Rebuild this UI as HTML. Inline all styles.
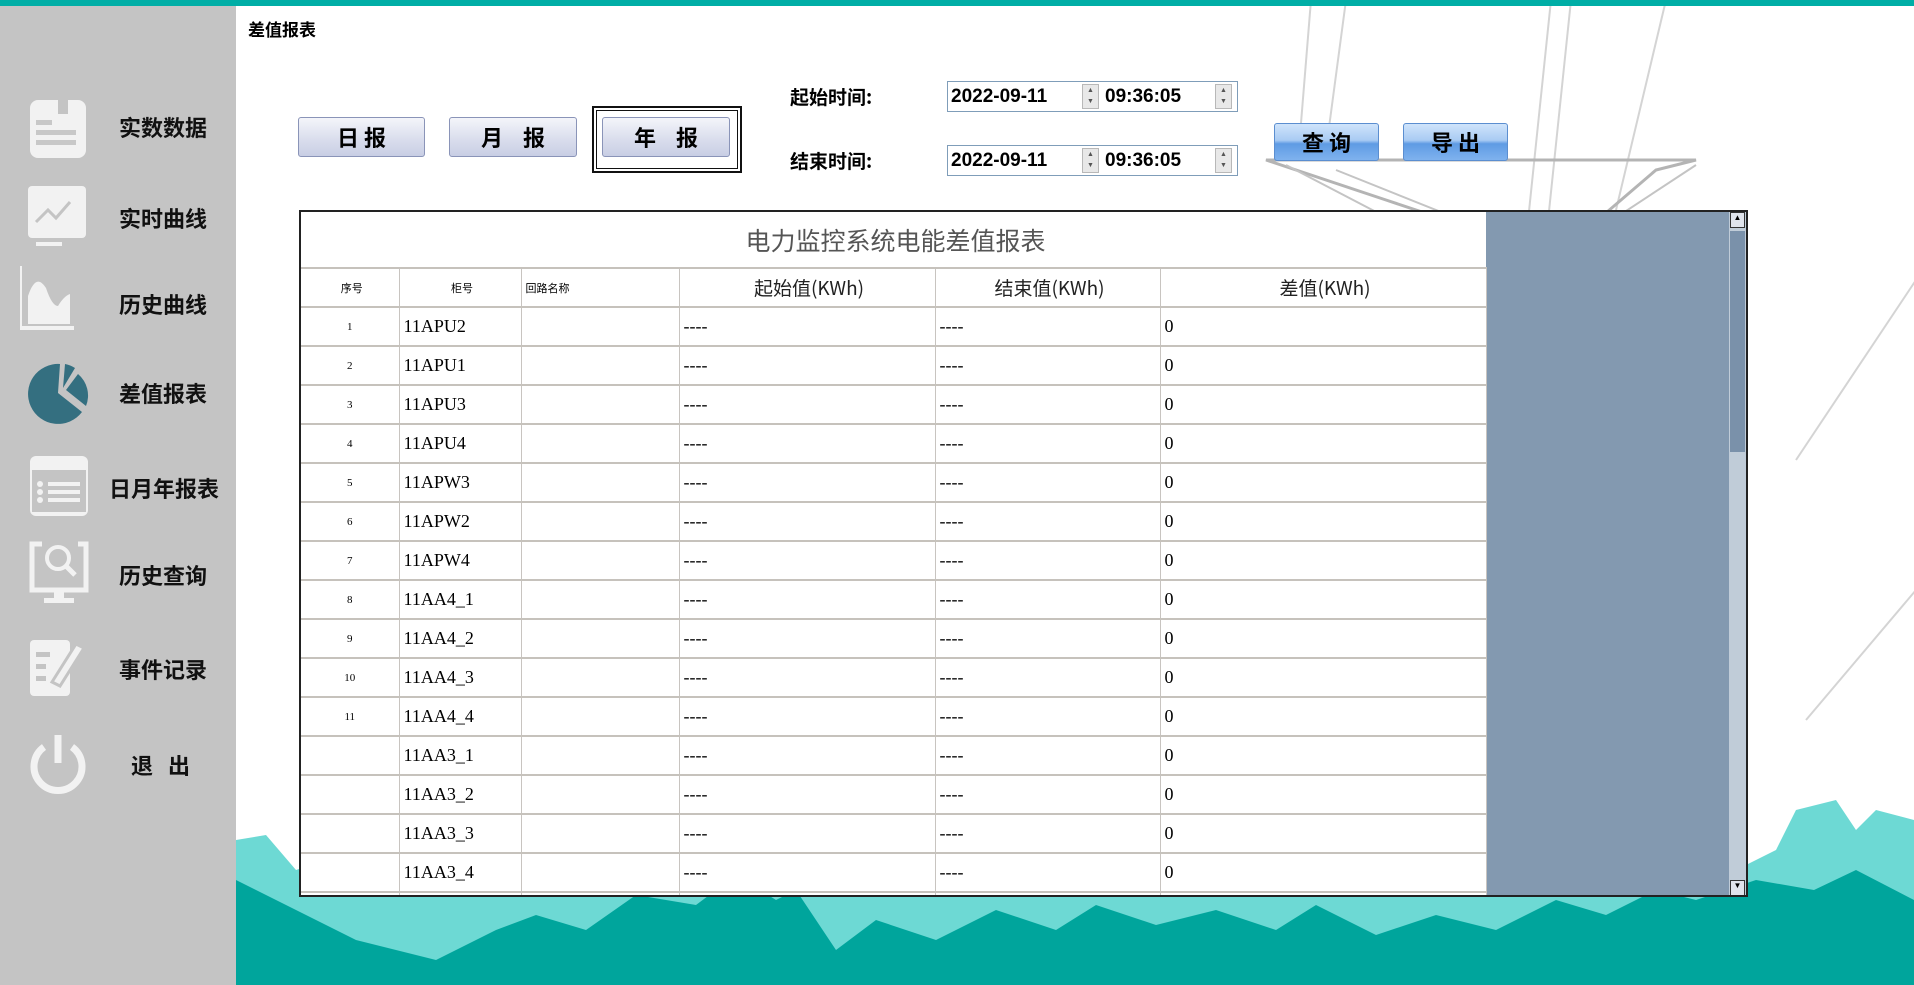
<!DOCTYPE html>
<html><head><meta charset="utf-8"><style>
*{margin:0;padding:0;box-sizing:border-box}
body{width:1914px;height:985px;position:relative;overflow:hidden;background:#fff;font-family:"Liberation Sans","Noto Sans CJK SC",sans-serif}
.top{position:absolute;left:0;top:0;width:1914px;height:6px;background:#00aea6}
.side{position:absolute;left:0;top:6px;width:236px;height:979px;background:#c4c4c4}
.nav{position:absolute;font-weight:bold;font-size:22px;color:#111;font-family:"Noto Sans CJK SC",sans-serif;white-space:nowrap}
.ic{position:absolute;left:28px}
.ttl{position:absolute;left:248px;top:16px;font-size:17px;font-weight:bold;font-family:"Noto Sans CJK SC",sans-serif}
.btn{position:absolute;height:40px;border:1px solid #8a94b8;border-radius:3px;background:linear-gradient(#f4f5fa,#d8dcec 60%,#c8cee4);font-size:22px;font-weight:bold;font-family:"Noto Sans CJK SC",sans-serif;text-align:center;line-height:38px;white-space:nowrap}
.lbl{position:absolute;left:790px;font-size:19px;font-weight:bold;font-family:"Noto Sans CJK SC",sans-serif}
.dt{position:absolute;left:947px;width:291px;height:31px;border:1px solid #7f9db9;background:#fff;font-family:"Liberation Sans",sans-serif;font-size:19px;font-weight:bold;line-height:29px}
.spin{position:absolute;top:2px;width:17px;height:25px;background:#e8e8e8;border:1px solid #b8b8b8;font-size:7px;color:#555;text-align:center;line-height:11px}
.qb{position:absolute;top:123px;width:105px;height:38px;border:1px solid #5b8ed0;border-radius:3px;background:linear-gradient(#cfe4fb,#a9cbf3 45%,#5f9be4 55%,#7fb2ee);font-size:22px;font-weight:bold;font-family:"Noto Sans CJK SC",sans-serif;text-align:center;line-height:36px;white-space:nowrap}
.tbl{position:absolute;left:299px;top:210px;width:1449px;height:687px;border:2px solid #222;background:#fff;overflow:hidden}
.grey{position:absolute;left:1185px;top:0;width:243px;height:685px;background:#8399b0}
.sb{position:absolute;left:1428px;top:0;width:17px;height:685px;background:#c0ccd8}
.thumb{position:absolute;left:1429px;top:19px;width:15px;height:221px;background:#7a91aa}
table{position:absolute;left:0;top:0;border-collapse:collapse;width:1185px;table-layout:fixed}
td{border-right:1px solid #c8c4c0;border-bottom:2px solid #c6c2bc;height:39px;font-family:"Liberation Serif","Noto Sans CJK SC",serif;font-size:18px;padding-left:4px;white-space:nowrap;overflow:hidden}
td.n{font-size:11px;text-align:center;padding:0}
.h td{height:39px}
.h td.s{font-size:11px;font-family:"Noto Sans CJK SC",sans-serif}
.h td.b{font-size:19px;text-align:center;font-family:"Noto Sans CJK SC",sans-serif;color:#222}
</style></head><body>
<svg style="position:absolute;left:236px;top:0" width="1678" height="985">
<g stroke="#d4d4d4" stroke-width="2" fill="none">
<line x1="1075" y1="0" x2="1062" y2="160"/><line x1="1110" y1="0" x2="1090" y2="150"/>
<line x1="1315" y1="0" x2="1290" y2="240"/><line x1="1335" y1="0" x2="1310" y2="240"/>
<line x1="1430" y1="0" x2="1380" y2="210"/><line x1="1680" y1="280" x2="1560" y2="460"/>
<line x1="1680" y1="590" x2="1570" y2="720"/>
<path d="M1030 160 L1460 160 L1420 170 L1350 230 L1320 300 L1270 300 L1240 230 L1150 200 Z" stroke="#b4b4b4" stroke-width="3"/>
<path d="M1050 165 L1290 290 M1460 165 L1270 290 M1100 170 L1300 250" stroke="#c4c4c4"/>
</g>
<path fill="#6dd9d4" d="M0 840 L30 835 L60 870 L90 860 L120 820 L140 840 L180 800 L240 850 L300 820 L340 860 L380 840 L420 850 L460 830 L520 870 L560 840 L600 850 L640 830 L700 845 L760 830 L800 850 L860 820 L900 840 L960 850 L1000 830 L1060 850 L1120 860 L1180 840 L1240 845 L1290 830 L1330 800 L1380 830 L1410 840 L1440 815 L1460 805 L1480 815 L1500 870 L1540 850 L1560 810 L1600 800 L1620 830 L1640 810 L1678 820 L1678 985 L0 985 Z"/>
<path fill="#00a59c" d="M0 880 L120 940 L200 960 L260 930 L300 915 L350 930 L400 895 L460 905 L500 875 L540 900 L560 890 L600 950 L640 920 L700 940 L760 910 L820 930 L860 905 L920 925 L980 910 L1040 930 L1080 905 L1140 935 L1200 915 L1260 930 L1320 900 L1370 915 L1420 890 L1460 900 L1520 880 L1578 890 L1620 870 L1678 900 L1678 985 L0 985 Z"/>
</svg>
<div class="top"></div>
<div class="side"></div>
<svg class="ic" style="top:98px" width="60" height="62"><rect x="2" y="2" width="56" height="58" rx="8" fill="#f2f2f2"/><rect x="30" y="0" width="10" height="16" fill="#c4c4c4"/><rect x="8" y="22" width="16" height="5" fill="#c8c8c8"/><rect x="8" y="32" width="40" height="5" fill="#c8c8c8"/><rect x="8" y="42" width="40" height="5" fill="#c8c8c8"/></svg>
<div class="nav" style="left:119px;top:111px">实数数据</div>
<svg class="ic" style="top:186px" width="60" height="62"><rect x="0" y="0" width="58" height="52" rx="4" fill="#f2f2f2"/><rect x="8" y="56" width="26" height="4" fill="#f2f2f2"/><path d="M8 36 L20 24 L28 32 L42 16" stroke="#c4c4c4" stroke-width="3" fill="none"/></svg>
<div class="nav" style="left:119px;top:202px">实时曲线</div>
<svg class="ic" style="top:266px;left:20px" width="56" height="64"><path d="M0 0 V62 H54" stroke="#f2f2f2" stroke-width="4" fill="none"/><path d="M8 58 V30 Q16 6 26 22 Q32 40 38 40 Q44 30 50 28 V58 Z" fill="#f2f2f2"/></svg>
<div class="nav" style="left:119px;top:288px">历史曲线</div>
<svg class="ic" style="top:362px" width="62" height="62"><path d="M30 31 L32 2 A30 30 0 1 0 54 50 Z" fill="#346f80"/><path d="M35 26 L37 2 A28 28 0 0 1 47 6 Z M38 28 L50 12 A28 28 0 0 1 58 44 Z" fill="#346f80"/></svg>
<div class="nav" style="left:119px;top:377px">差值报表</div>
<svg class="ic" style="top:456px" width="62" height="62"><rect x="2" y="0" width="58" height="60" rx="6" fill="#f2f2f2"/><rect x="4" y="14" width="54" height="42" fill="#c4c4c4"/><g fill="#f2f2f2"><circle cx="12" cy="28" r="3"/><circle cx="12" cy="36" r="3"/><circle cx="12" cy="44" r="3"/><rect x="20" y="26" width="32" height="4"/><rect x="20" y="34" width="32" height="4"/><rect x="20" y="42" width="32" height="4"/></g></svg>
<div class="nav" style="left:109px;top:472px">日月年报表</div>
<svg class="ic" style="top:540px" width="62" height="66"><path d="M14 4 H4 V50 H58 V4 H50" stroke="#f2f2f2" stroke-width="5" fill="none"/><circle cx="30" cy="18" r="11" stroke="#f2f2f2" stroke-width="4" fill="none"/><path d="M38 26 L47 35" stroke="#f2f2f2" stroke-width="5"/><rect x="26" y="50" width="10" height="8" fill="#f2f2f2"/><rect x="16" y="58" width="30" height="5" fill="#f2f2f2"/></svg>
<div class="nav" style="left:119px;top:559px">历史查询</div>
<svg class="ic" style="top:636px" width="62" height="62"><rect x="2" y="4" width="40" height="56" rx="4" fill="#f2f2f2"/><g fill="#c4c4c4"><rect x="8" y="16" width="14" height="5"/><rect x="8" y="28" width="10" height="5"/><rect x="8" y="40" width="10" height="5"/></g><path d="M24 46 L48 8 L56 12 L32 50 Z" fill="#f2f2f2" stroke="#c4c4c4" stroke-width="3"/></svg>
<div class="nav" style="left:119px;top:653px">事件记录</div>
<svg class="ic" style="top:733px" width="62" height="64"><path d="M16 14 A24 24 0 1 0 44 14" stroke="#f2f2f2" stroke-width="7" fill="none"/><path d="M30 2 V30" stroke="#f2f2f2" stroke-width="7"/></svg>
<div class="nav" style="left:131px;top:749px">退&nbsp;&nbsp;&nbsp;出</div>
<div class="ttl">差值报表</div>
<div class="btn" style="left:298px;top:117px;width:127px">日&nbsp;报</div>
<div class="btn" style="left:449px;top:117px;width:128px">月&nbsp;&nbsp;&nbsp;&nbsp;报</div>
<div style="position:absolute;left:592px;top:106px;width:150px;height:67px;border:2px solid #111"></div>
<div style="position:absolute;left:596px;top:110px;width:142px;height:59px;border:1px solid #111"></div>
<div class="btn" style="left:602px;top:117px;width:128px">年&nbsp;&nbsp;&nbsp;&nbsp;报</div>
<div class="lbl" style="top:83px">起始时间:</div>
<div class="lbl" style="top:147px">结束时间:</div>
<div class="dt" style="top:81px"><span style="margin-left:3px">2022-09-11</span><div class="spin" style="left:134px">▲<br>▼</div><span style="position:absolute;left:157px">09:36:05</span><div class="spin" style="left:267px">▲<br>▼</div></div>
<div class="dt" style="top:145px"><span style="margin-left:3px">2022-09-11</span><div class="spin" style="left:134px">▲<br>▼</div><span style="position:absolute;left:157px">09:36:05</span><div class="spin" style="left:267px">▲<br>▼</div></div>
<div class="qb" style="left:1274px">查&nbsp;询</div>
<div class="qb" style="left:1403px">导&nbsp;出</div>
<div class="tbl">
<div class="grey"></div><div class="sb"></div><div class="thumb"></div>
<div style="position:absolute;left:1429px;top:0;width:15px;height:16px;background:#e0e4ec;border:1px solid #333;font-size:8px;text-align:center">▲</div>
<div style="position:absolute;left:1429px;top:668px;width:15px;height:16px;background:#e0e4ec;border:1px solid #333;font-size:8px;text-align:center">▼</div>
<table>
<colgroup><col style="width:98px"><col style="width:122px"><col style="width:158px"><col style="width:256px"><col style="width:225px"><col style="width:326px"></colgroup>
<tr><td colspan="6" style="height:56px;text-align:center;font-size:25px;color:#555;font-family:'Noto Sans CJK SC',sans-serif;border-right:none">电力监控系统电能差值报表</td></tr>
<tr class="h"><td class="s" style="text-align:center">序号</td><td class="s" style="text-align:center">柜号</td><td class="s">回路名称</td><td class="b">起始值(KWh)</td><td class="b">结束值(KWh)</td><td class="b">差值(KWh)</td></tr>
<tr><td class="n">1</td><td>11APU2</td><td></td><td>----</td><td>----</td><td>0</td></tr>
<tr><td class="n">2</td><td>11APU1</td><td></td><td>----</td><td>----</td><td>0</td></tr>
<tr><td class="n">3</td><td>11APU3</td><td></td><td>----</td><td>----</td><td>0</td></tr>
<tr><td class="n">4</td><td>11APU4</td><td></td><td>----</td><td>----</td><td>0</td></tr>
<tr><td class="n">5</td><td>11APW3</td><td></td><td>----</td><td>----</td><td>0</td></tr>
<tr><td class="n">6</td><td>11APW2</td><td></td><td>----</td><td>----</td><td>0</td></tr>
<tr><td class="n">7</td><td>11APW4</td><td></td><td>----</td><td>----</td><td>0</td></tr>
<tr><td class="n">8</td><td>11AA4_1</td><td></td><td>----</td><td>----</td><td>0</td></tr>
<tr><td class="n">9</td><td>11AA4_2</td><td></td><td>----</td><td>----</td><td>0</td></tr>
<tr><td class="n">10</td><td>11AA4_3</td><td></td><td>----</td><td>----</td><td>0</td></tr>
<tr><td class="n">11</td><td>11AA4_4</td><td></td><td>----</td><td>----</td><td>0</td></tr>
<tr><td class="n"></td><td>11AA3_1</td><td></td><td>----</td><td>----</td><td>0</td></tr>
<tr><td class="n"></td><td>11AA3_2</td><td></td><td>----</td><td>----</td><td>0</td></tr>
<tr><td class="n"></td><td>11AA3_3</td><td></td><td>----</td><td>----</td><td>0</td></tr>
<tr><td class="n"></td><td>11AA3_4</td><td></td><td>----</td><td>----</td><td>0</td></tr>
<tr><td class="n"></td><td></td><td></td><td></td><td></td><td></td></tr>
</table>
</div>
</body></html>
